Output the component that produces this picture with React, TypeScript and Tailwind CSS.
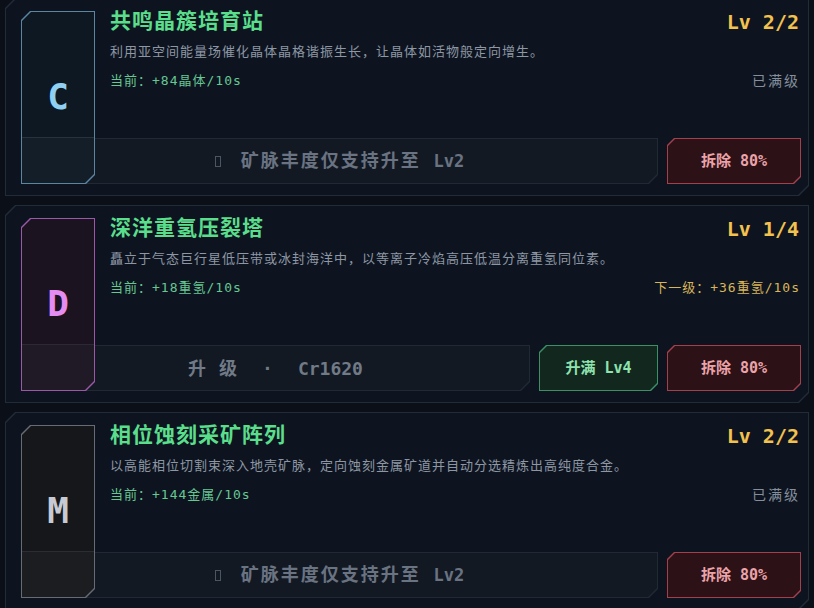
import React from 'react';

// chamfered corners: top-left + bottom-right
const CUT10 = '[clip-path:polygon(10px_0,100%_0,100%_calc(100%_-_10px),calc(100%_-_10px)_100%,0_100%,0_10px)]';
const CUT9 = '[clip-path:polygon(9px_0,100%_0,100%_calc(100%_-_9px),calc(100%_-_9px)_100%,0_100%,0_9px)]';
const CUT7 = '[clip-path:polygon(7px_0,100%_0,100%_calc(100%_-_7px),calc(100%_-_7px)_100%,0_100%,0_7px)]';

type Theme = {
  border: string;
  fill: string;
  letter: string;
};

const themes: Record<string, Theme> = {
  C: {
    border: 'bg-[#5a86a2]',
    fill: 'bg-[linear-gradient(to_bottom,#0e1822_calc(100%_-_46px),#27323f_calc(100%_-_46px),#27323f_calc(100%_-_45px),#141e28_calc(100%_-_45px))]',
    letter: 'text-[#8fd0f2]',
  },
  D: {
    border: 'bg-[#9a58a6]',
    fill: 'bg-[linear-gradient(to_bottom,#1b1320_calc(100%_-_46px),#2c2835_calc(100%_-_46px),#2c2835_calc(100%_-_45px),#201a27_calc(100%_-_45px))]',
    letter: 'text-[#e48cf2]',
  },
  M: {
    border: 'bg-[#676b73]',
    fill: 'bg-[linear-gradient(to_bottom,#16171a_calc(100%_-_46px),#2a2d33_calc(100%_-_46px),#2a2d33_calc(100%_-_45px),#1b1d21_calc(100%_-_45px))]',
    letter: 'text-[#c6cad3]',
  },
};

type Item = {
  letter: 'C' | 'D' | 'M';
  title: string;
  lv: string;
  desc: string;
  current: string;
  right: string;
  maxed: boolean;
};

const items: Item[] = [
  {
    letter: 'C',
    title: '共鸣晶簇培育站',
    lv: 'Lv 2/2',
    desc: '利用亚空间能量场催化晶体晶格谐振生长，让晶体如活物般定向增生。',
    current: '当前：+84晶体/10s',
    right: '已满级',
    maxed: true,
  },
  {
    letter: 'D',
    title: '深洋重氢压裂塔',
    lv: 'Lv 1/4',
    desc: '矗立于气态巨行星低压带或冰封海洋中，以等离子冷焰高压低温分离重氢同位素。',
    current: '当前：+18重氢/10s',
    right: '下一级：+36重氢/10s',
    maxed: false,
  },
  {
    letter: 'M',
    title: '相位蚀刻采矿阵列',
    lv: 'Lv 2/2',
    desc: '以高能相位切割束深入地壳矿脉，定向蚀刻金属矿道并自动分选精炼出高纯度合金。',
    current: '当前：+144金属/10s',
    right: '已满级',
    maxed: true,
  },
];

const DemolishButton = () => (
  <div className={`${CUT7} bg-[#a3404c] p-px w-[134px] shrink-0`}>
    <div className={`${CUT7} bg-[#2c1116] h-full flex items-center justify-center text-[15px] font-bold text-[#eba3aa]`}>
      拆除 80%
    </div>
  </div>
);

const BuildingCard: React.FC<{ item: Item }> = ({ item }) => {
  const t = themes[item.letter];

  return (
    <div className={`${CUT10} bg-[#222b38] p-px h-[198px]`}>
      <div className={`${CUT10} bg-[#0d1420] h-full pt-[12px] pl-[15px] pr-[7px] pb-[11px]`}>
        <div className="grid grid-cols-[74px_1fr] grid-rows-[127px_46px] h-full">
          {/* bottom action row, runs under the icon box */}
          <div className="col-start-1 col-end-3 row-start-2 flex gap-[9px]">
            <div className={`${CUT9} bg-[#212935] p-px flex-1`}>
              <div className={`${CUT9} bg-[#121923] h-full flex items-center justify-center`}>
                {item.maxed ? (
                  <div className="flex items-center gap-[20px] text-[#6a7381] font-bold">
                    <span className="inline-block w-[6px] h-[11px] border border-[#4c5562]" />
                    <span className="text-[18px] tracking-[2px]">
                      矿脉丰度仅支持升至 <span className="text-[17px] tracking-normal">Lv2</span>
                    </span>
                  </div>
                ) : (
                  <div className="flex items-center text-[18px] font-bold text-[#717a87]">
                    <span className="flex gap-[13px]">
                      <span>升</span>
                      <span>级</span>
                    </span>
                    <span className="ml-[25px]">·</span>
                    <span className="ml-[25px]">Cr1620</span>
                  </div>
                )}
              </div>
            </div>
            {!item.maxed && (
              <div className={`${CUT7} bg-[#3c9066] p-px w-[119px] shrink-0`}>
                <div className={`${CUT7} bg-[#12281e] h-full flex items-center justify-center text-[15px] font-bold text-[#8fe3ae]`}>
                  升满 Lv4
                </div>
              </div>
            )}
            <DemolishButton />
          </div>

          {/* icon box */}
          <div className={`${CUT9} ${t.border} p-px col-start-1 row-start-1 row-span-2 relative z-10`}>
            <div className={`${CUT9} ${t.fill} h-full flex items-center justify-center`}>
              <span className={`${t.letter} text-[36px] font-bold leading-none -mt-[2px]`}>{item.letter}</span>
            </div>
          </div>

          {/* text column */}
          <div className="col-start-2 row-start-1 pl-[15px] flex flex-col">
            <div className="flex items-center justify-between h-[22px]">
              <span className="text-[21px] font-bold tracking-[1px] text-[#5ade8c]">{item.title}</span>
              <span className="text-[20px] font-bold text-[#f2c14e] pr-[2px]">{item.lv}</span>
            </div>
            <p className="mt-[10px] text-[13px] leading-[18px] tracking-[1px] text-[#8d97a4] whitespace-nowrap">{item.desc}</p>
            <div className="mt-[11px] flex items-center justify-between h-[18px] text-[13px] tracking-[1px]">
              <span className="text-[#66c793]">{item.current}</span>
              {item.maxed ? (
                <span className="text-[14px] tracking-[2px] text-[#858f9c] pr-[1px]">{item.right}</span>
              ) : (
                <span className="text-[#d9b559] pr-[1px]">{item.right}</span>
              )}
            </div>
          </div>
        </div>
      </div>
    </div>
  );
};

export default function App() {
  return (
    <div className="h-[608px] overflow-hidden bg-[#0a0f18] [font-family:'DejaVu_Sans_Mono','Noto_Sans_CJK_SC',monospace]">
      <div className="flex flex-col gap-[9px] px-[5px] -mt-[2px]">
        {items.map((item) => (
          <BuildingCard key={item.letter} item={item} />
        ))}
      </div>
    </div>
  );
}
